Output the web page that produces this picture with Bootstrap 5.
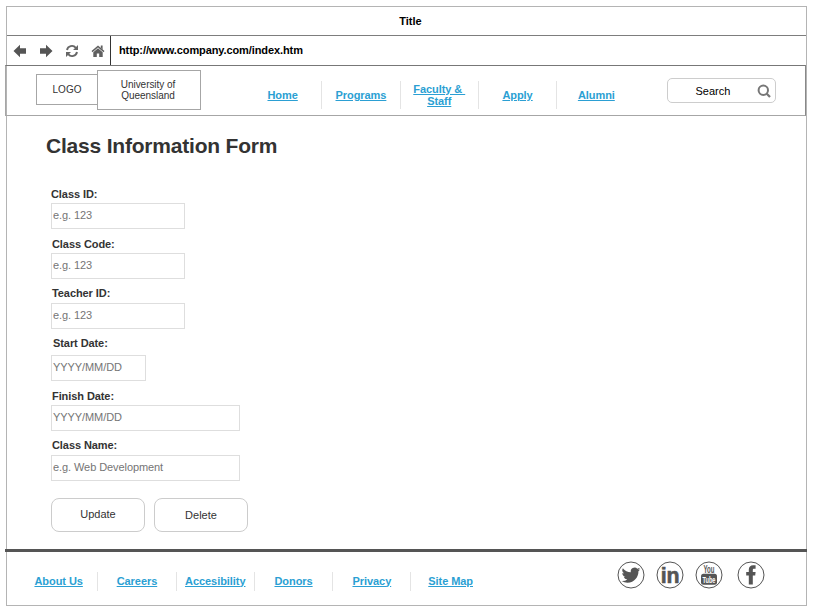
<!DOCTYPE html>
<html lang="en">
<head>
<meta charset="utf-8">
<title>Class Information Form</title>
<meta name="viewport" content="width=device-width, initial-scale=1">
<link href="https://cdn.jsdelivr.net/npm/bootstrap@5.3.0/dist/css/bootstrap.min.css" rel="stylesheet">
<style>
body{font-family:"Liberation Sans",Arial,sans-serif;font-size:11px;line-height:12px;color:#333;background:#fff;overflow:hidden}
svg{display:block;flex:none}
.window{margin:6px 0 0 6px;width:801px;height:600px;border:1px solid #b4b4b4}
.title-row{height:29px;border-bottom:1px solid #7d7d7d;color:#000;padding-left:8px}
.address-row{height:29px;color:#000}
.tools{width:104px;border-right:1px solid #333;padding-left:6px;gap:12px}
.url{padding:0 0 2px 8px;letter-spacing:-.1px}
.site-head{height:51px;margin:0 0 0 -2px;width:801px;border:1px solid #a6a6a6;border-top:1px solid #777;border-right-color:#888}
.logo-box{width:62px;height:31px;margin:8px 0 0 30px;border:1px solid #a6a6a6;font-size:10px}
.uni-box{width:104px;height:40px;margin:4px 0 0 -1px;border:1px solid #a6a6a6;font-size:10px;line-height:11px;background:#fff;padding-right:2px;letter-spacing:-.05px}
.site-link{color:#2b9fd3;font-weight:700;text-decoration:underline;letter-spacing:-.06px}
.site-link:hover{color:#17759f}
.menu-item{width:78.3px;border-right:1px solid #e4e4e4}
.menu-item:last-child{border-right:0}
.main-menu{margin:15px 0 0 43px;height:28px}
.search-box{width:109px;height:25px;margin:12px 0 0 32px;border:1px solid #cdcdcd;border-radius:5px;color:#000;padding:0 4px 0 27px}
.form-area{height:433px;padding:17px 0 0 39px}
.form-title{font-size:21px;line-height:26px;font-weight:700;letter-spacing:-.2px;margin:0 0 29px}
.fields{padding-left:5px}
.field{height:50px}
.field label{display:block;height:15px;line-height:13px;font-weight:700;padding-left:1px;letter-spacing:-.08px}
.field .form-control{height:26px;width:134px;padding:0 0 2px 1px;border:1px solid #dedede;border-radius:0;font-size:11px;line-height:14px;color:#333;letter-spacing:-.08px}
.field .form-control::placeholder{color:#757575;opacity:1}
.field .short{width:95px}
.field .wide{width:189px}
.field-tight{height:49px}
.field-start{height:53px}
.field-start label{height:18px;padding-left:2px}
.field-last{height:59px}
.field .label-tall{height:16px}
.actions{gap:9px}
.action{width:94px;height:34px;padding:0 0 2px;font-size:11px;line-height:14px;border:1px solid #ccc;border-radius:8px;color:#333;background:#fff}
.action:last-child{padding:0}
.site-foot{border-top:3px solid #555;margin:0 -1px 0 -2px;height:55px}
.foot-menu{height:19px;margin:20px 0 0 15px}
.foot-menu .menu-item{padding-bottom:2px}
.social{margin:9px 0 0 127px;gap:11px}
.social .fb{margin-left:3px}
</style>
<script src="https://cdn.jsdelivr.net/npm/bootstrap@5.3.0/dist/js/bootstrap.bundle.min.js"></script>
</head>
<body>
<div class="window">
  <div class="title-row d-flex align-items-center justify-content-center fw-bold">Title</div>
  <div class="address-row d-flex align-items-stretch">
    <div class="tools d-flex align-items-center">
      <svg width="14" height="14" viewBox="0 0 14 14" fill="#555"><path d="M.5 7 7 .8v3.4h6v5.6H7v3.4z"/></svg>
      <svg width="14" height="14" viewBox="0 0 14 14" fill="#555"><path d="M13.5 7 7 .8v3.4H1v5.6h6v3.4z"/></svg>
      <svg width="14" height="14" viewBox="0 0 14 14"><path d="M2 6a5 5 0 0 1 8.8-2.2M12 8a5 5 0 0 1-8.8 2.2" fill="none" stroke="#666" stroke-width="1.9"/><path d="M13 1v5H8zM1 13V8h5z" fill="#666"/></svg>
      <svg width="14" height="14" viewBox="0 0 14 14" fill="#606060"><path d="M7 4.3 2.3 8.3V13h3.500V9.500h2.400V13h3.500V8.300z"/><path d="M1 7.600 7 2.400l6 5.200" fill="none" stroke="#606060" stroke-width="1.5"/><path d="M9.800 1.500h1.800v4L9.800 4z"/></svg>
    </div>
    <div class="url d-flex align-items-center fw-bold">http://www.company.com/index.htm</div>
  </div>
  <header class="site-head d-flex align-items-start">
    <div class="logo-box d-flex align-items-center justify-content-center">LOGO</div>
    <div class="uni-box d-flex align-items-center justify-content-center text-center">University of<br>Queensland</div>
    <nav class="main-menu d-flex">
      <div class="menu-item d-flex align-items-center justify-content-center text-center"><a class="site-link" href="#">Home</a></div>
      <div class="menu-item d-flex align-items-center justify-content-center text-center"><a class="site-link" href="#">Programs</a></div>
      <div class="menu-item d-flex align-items-center justify-content-center text-center"><a class="site-link" href="#">Faculty &amp;&nbsp;<br>Staff</a></div>
      <div class="menu-item d-flex align-items-center justify-content-center text-center"><a class="site-link" href="#">Apply</a></div>
      <div class="menu-item d-flex align-items-center justify-content-center text-center"><a class="site-link" href="#">Alumni</a></div>
    </nav>
    <div class="search-box d-flex align-items-center justify-content-between">Search
      <svg width="14" height="14" viewBox="0 0 14 14" fill="none" stroke="#777"><circle cx="6.3" cy="6.2" r="4.7" stroke-width="2"/><path d="m9.500 9.500 3.500 3.500" stroke-width="2.300"/></svg>
    </div>
  </header>
  <main class="form-area">
    <h1 class="form-title">Class Information Form</h1>
    <form class="fields">
      <div class="field"><label class="ps-0" for="cid">Class ID:</label><input id="cid" class="form-control" placeholder="e.g. 123"></div>
      <div class="field field-tight"><label for="code">Class Code:</label><input id="code" class="form-control" placeholder="e.g. 123"></div>
      <div class="field"><label for="tid" class="label-tall">Teacher ID:</label><input id="tid" class="form-control" placeholder="e.g. 123"></div>
      <div class="field field-start"><label for="sd">Start Date:</label><input id="sd" class="form-control short" placeholder="YYYY/MM/DD"></div>
      <div class="field field-tight"><label for="fd">Finish Date:</label><input id="fd" class="form-control wide" placeholder="YYYY/MM/DD"></div>
      <div class="field field-last"><label for="cn" class="label-tall">Class Name:</label><input id="cn" class="form-control wide" placeholder="e.g. Web Development"></div>
      <div class="d-flex actions">
        <button type="button" class="btn action">Update</button>
        <button type="button" class="btn action">Delete</button>
      </div>
    </form>
  </main>
  <footer class="site-foot d-flex align-items-start">
    <nav class="foot-menu d-flex">
      <div class="menu-item d-flex align-items-center justify-content-center"><a class="site-link" href="#">About Us</a></div>
      <div class="menu-item d-flex align-items-center justify-content-center"><a class="site-link" href="#">Careers</a></div>
      <div class="menu-item d-flex align-items-center justify-content-center"><a class="site-link" href="#">Accesibility</a></div>
      <div class="menu-item d-flex align-items-center justify-content-center"><a class="site-link" href="#">Donors</a></div>
      <div class="menu-item d-flex align-items-center justify-content-center"><a class="site-link" href="#">Privacy</a></div>
      <div class="menu-item d-flex align-items-center justify-content-center"><a class="site-link" href="#">Site Map</a></div>
    </nav>
    <div class="social d-flex">
      <svg width="28" height="28" viewBox="0 0 28 28"><circle cx="14" cy="14" r="13" fill="none" stroke="#555"/><path transform="translate(4.6 4.2) scale(1.17)" fill="#555" d="M5.026 15c6.038 0 9.341-5.003 9.341-9.334 0-.14 0-.282-.006-.422A6.685 6.685 0 0 0 16 3.542a6.658 6.658 0 0 1-1.889.518 3.301 3.301 0 0 0 1.447-1.817 6.533 6.533 0 0 1-2.087.793A3.286 3.286 0 0 0 7.875 6.03a9.325 9.325 0 0 1-6.767-3.429 3.289 3.289 0 0 0 1.018 4.382A3.323 3.323 0 0 1 .64 6.575v.045a3.288 3.288 0 0 0 2.632 3.218 3.203 3.203 0 0 1-.865.115 3.230 3.230 0 0 1-.614-.057 3.283 3.283 0 0 0 3.067 2.277A6.588 6.588 0 0 1 .780 13.580a6.320 6.320 0 0 1-.780-.045A9.344 9.344 0 0 0 5.026 15z"/></svg>
      <svg width="28" height="28" viewBox="0 0 28 28"><circle cx="14" cy="14" r="13" fill="none" stroke="#555"/><text x="14.2" y="22" text-anchor="middle" font-size="22" font-weight="700" fill="#555" stroke="#555" stroke-width=".6" textLength="19" lengthAdjust="spacingAndGlyphs">in</text></svg>
      <svg width="28" height="28" viewBox="0 0 28 28"><circle cx="14" cy="14" r="13" fill="none" stroke="#555"/><text x="14" y="11.700" text-anchor="middle" font-size="10" font-weight="700" fill="#555" textLength="11" lengthAdjust="spacingAndGlyphs">You</text><rect x="6" y="12.800" width="16" height="11" rx="2.500" fill="#555"/><text x="14" y="21.500" text-anchor="middle" font-size="9" font-weight="700" fill="#fff" textLength="13" lengthAdjust="spacingAndGlyphs">Tube</text></svg>
      <svg class="fb" width="28" height="28" viewBox="0 0 28 28"><circle cx="14" cy="14" r="13" fill="none" stroke="#555"/><path fill="#555" d="M11.800 23.500V14.600H9.200V11h2.600V8.800c0-3 1.700-4.500 4.300-4.500h2.500v3.500h-1.500c-1 0-1.300.5-1.300 1.300V11h2.800l-.4 3.600h-2.400v8.900z"/></svg>
    </div>
  </footer>
</div>
</body>
</html>
